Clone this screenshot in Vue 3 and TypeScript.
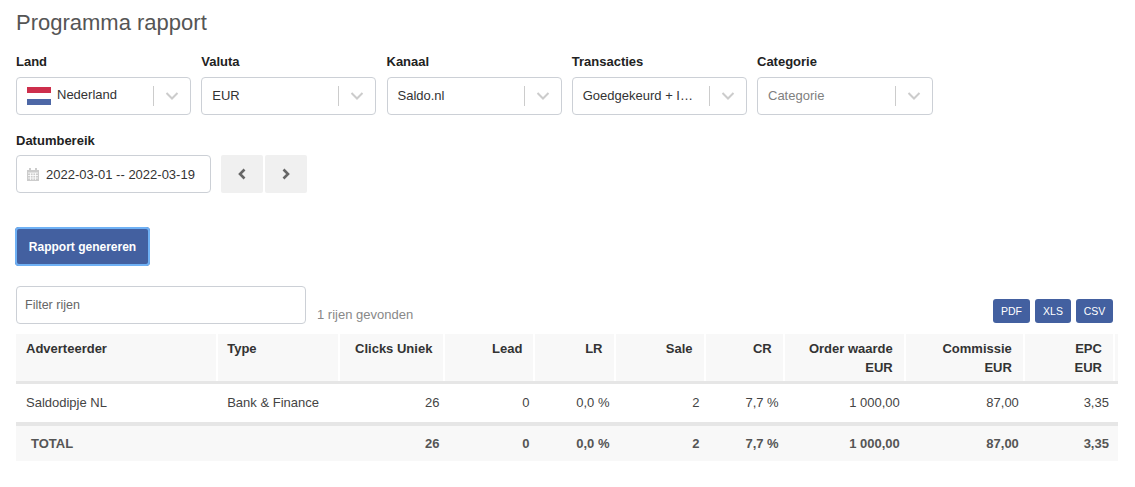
<script setup lang="ts">
interface Filter {
  label: string;
  value: string;
  placeholder?: boolean;
  flag?: boolean;
}

const filters: Filter[] = [
  { label: "Land", value: "Nederland", flag: true },
  { label: "Valuta", value: "EUR" },
  { label: "Kanaal", value: "Saldo.nl" },
  { label: "Transacties", value: "Goedgekeurd + I…" },
  { label: "Categorie", value: "Categorie", placeholder: true },
];

const colWidths = [201, 122, 105, 90, 80, 90, 79, 121, 119, 90, 4];

const headers = [
  { top: "Adverteerder", left: true },
  { top: "Type", left: true },
  { top: "Clicks Uniek" },
  { top: "Lead" },
  { top: "LR" },
  { top: "Sale" },
  { top: "CR" },
  { top: "Order waarde", sub: "EUR" },
  { top: "Commissie", sub: "EUR" },
  { top: "EPC", sub: "EUR" },
];

const values = ["26", "0", "0,0 %", "2", "7,7 %", "1 000,00", "87,00", "3,35"];
</script>

<template>
  <div class="page">
    <h1>Programma rapport</h1>

    <div class="filters">
      <div v-for="f in filters" :key="f.label" class="field">
        <label>{{ f.label }}</label>
        <div class="select">
          <svg v-if="f.flag" class="flag" width="24" height="18" viewBox="0 0 24 18">
            <rect width="24" height="6" fill="#cd2f4c" />
            <rect y="6" width="24" height="6" fill="#fff" />
            <rect y="12" width="24" height="6" fill="#4d67a6" />
          </svg>
          <span class="value" :class="{ muted: f.placeholder, raised: f.flag }">{{ f.value }}</span>
          <span class="sep"></span>
          <svg class="chevron" width="14" height="8" viewBox="0 0 14 8">
            <path d="M1.500 1 L7 6.500 L12.500 1" fill="none" stroke="#ccc" stroke-width="2" />
          </svg>
        </div>
      </div>
    </div>

    <div class="date-field">
      <label>Datumbereik</label>
      <div class="date-row">
        <div class="date-input">
          <svg width="12" height="13" viewBox="0 0 12 13">
            <path d="M0 2h2V0h2v2h4V0h2v2h2v11H0z" fill="#ccc" />
            <path d="M1 5h10M1 7.500h10M1 10h10M3.500 5v7M6 5v7M8.500 5v7" stroke="#fff" stroke-width=".8" />
          </svg>
          <span>2022-03-01 -- 2022-03-19</span>
        </div>
        <button class="nav" type="button" aria-label="Vorige">
          <svg width="10" height="12" viewBox="0 0 10 12">
            <path d="M7.500 1.500 L3 6 L7.500 10.500" fill="none" stroke="#666" stroke-width="2.600" />
          </svg>
        </button>
        <button class="nav" type="button" aria-label="Volgende">
          <svg width="10" height="12" viewBox="0 0 10 12">
            <path d="M2.500 1.500 L7 6 L2.500 10.500" fill="none" stroke="#666" stroke-width="2.600" />
          </svg>
        </button>
      </div>
    </div>

    <button class="generate" type="button">Rapport genereren</button>

    <div class="toolbar">
      <input class="search" type="text" placeholder="Filter rijen" />
      <span class="count">1 rijen gevonden</span>
      <div class="exports">
        <button type="button">PDF</button>
        <button type="button">XLS</button>
        <button type="button">CSV</button>
      </div>
    </div>

    <table>
      <colgroup>
        <col v-for="(w, i) in colWidths" :key="i" :style="{ width: w + 'px' }" />
      </colgroup>
      <thead>
        <tr>
          <th v-for="h in headers" :key="h.top" :class="{ left: h.left }">
            {{ h.top }}<br v-if="h.sub" />{{ h.sub }}
          </th>
          <th></th>
        </tr>
      </thead>
      <tbody>
        <tr class="row">
          <td class="left">Saldodipje NL</td>
          <td class="left">Bank &amp; Finance</td>
          <td v-for="(v, i) in values" :key="i">{{ v }}</td>
          <td></td>
        </tr>
        <tr class="total">
          <td class="left name">TOTAL</td>
          <td></td>
          <td v-for="(v, i) in values" :key="i">{{ v }}</td>
          <td></td>
        </tr>
      </tbody>
    </table>
  </div>
</template>

<style>
html,
body {
  margin: 0;
  background: #fff;
}
</style>

<style scoped>
.page {
  width: 1135px;
  height: 487px;
  box-sizing: border-box;
  padding: 11px 0 0 16px;
  overflow: hidden;
  font-family: "Liberation Sans", Arial, sans-serif;
  font-size: 13px;
  color: #333;
}
h1 {
  margin: 0;
  font-size: 22px;
  line-height: 24px;
  font-weight: 400;
  color: #555;
}
.filters {
  display: flex;
  gap: 10.250px;
  margin-top: 19px;
}
.field {
  width: 175px;
}
.field:last-child {
  width: 176px;
}
label {
  display: block;
  height: 23px;
  line-height: 16px;
  font-weight: 700;
  color: #222;
}
.select {
  display: flex;
  align-items: center;
  height: 38px;
  box-sizing: border-box;
  padding: 0 11px 0 10px;
  border: 1px solid #ccd0d6;
  border-radius: 4px;
  background: #fff;
}
.flag {
  flex: none;
  margin-right: 6px;
}
.value {
  position: relative;
  top: -1px;
  flex: 1;
  min-width: 0;
  white-space: nowrap;
}
.raised {
  top: -2px;
}
.muted {
  color: #808080;
}
.sep {
  flex: none;
  width: 1px;
  height: 20px;
  margin-left: 8px;
  background: #ccc;
}
.chevron {
  flex: none;
  margin-left: 11px;
}
.date-field {
  margin-top: 18px;
}
.date-field label {
  height: 22px;
}
.date-row {
  display: flex;
}
.date-input {
  display: flex;
  align-items: center;
  gap: 7px;
  width: 195px;
  height: 38px;
  box-sizing: border-box;
  padding-left: 10px;
  border: 1px solid #ccd0d6;
  border-radius: 4px;
  white-space: nowrap;
}
.nav {
  display: flex;
  align-items: center;
  justify-content: center;
  width: 42px;
  height: 38px;
  padding: 0;
  border: 0;
  border-radius: 2px;
  background: #f0f0f0;
}
.date-input + .nav {
  margin-left: 10px;
}
.nav + .nav {
  margin-left: 2px;
}
.generate {
  display: block;
  width: 135px;
  height: 39px;
  margin: 34px 0 0 -1px;
  padding: 0;
  border: 0;
  border-radius: 4px;
  outline: 2px solid #6fb1f5;
  outline-offset: -2px;
  background: #4360a0;
  color: #fff;
  font: 700 12px "Liberation Sans", Arial, sans-serif;
}
.toolbar {
  position: relative;
  display: flex;
  align-items: flex-end;
  height: 38px;
  margin-top: 20px;
}
.search {
  width: 290px;
  height: 38px;
  box-sizing: border-box;
  padding: 0 8px;
  border: 1px solid #ccd0d6;
  border-radius: 4px;
  font: 12.500px "Liberation Sans", Arial, sans-serif;
  color: #333;
}
.search::placeholder {
  color: #666;
  opacity: 1;
}
.count {
  margin-left: 11px;
  padding-bottom: 1px;
  font-size: 13px;
  line-height: 16px;
  color: #888;
}
.exports {
  display: flex;
  gap: 5px;
  margin-left: auto;
  margin-right: 22px;
  padding-bottom: 1px;
}
.exports button {
  width: 37px;
  height: 24px;
  padding: 0;
  border: 0;
  border-radius: 3px;
  background: #4360a0;
  color: #fff;
  font: 10.500px "Liberation Sans", Arial, sans-serif;
}
.exports button:nth-child(2) {
  width: 36px;
}
table {
  table-layout: fixed;
  width: 1102px;
  margin-top: 10px;
  border-collapse: collapse;
  border-spacing: 0;
}
th {
  height: 48px;
  box-sizing: border-box;
  padding: 5px 11px 0 10px;
  vertical-align: top;
  text-align: right;
  font-size: 13px;
  line-height: 19px;
  font-weight: 700;
  color: #333;
  background: #f8f8f8;
  border-right: 2px solid #fff;
  border-bottom: 3px solid #e6e6e6;
}
th:nth-child(2) {
  padding-left: 9px;
}
th:last-child {
  border-right: 0;
}
th.left,
td.left {
  text-align: left;
}
td {
  height: 38px;
  box-sizing: border-box;
  padding: 0 5px 0 10px;
  text-align: right;
  white-space: nowrap;
  font-size: 13px;
  color: #444;
}
.row td {
  height: 42px;
  border-bottom: 4px solid #e6e6e6;
}
.total td {
  height: 37px;
  background: #f8f8f8;
  font-weight: 700;
  color: #555;
}
td.name {
  padding-left: 15px;
}
</style>
